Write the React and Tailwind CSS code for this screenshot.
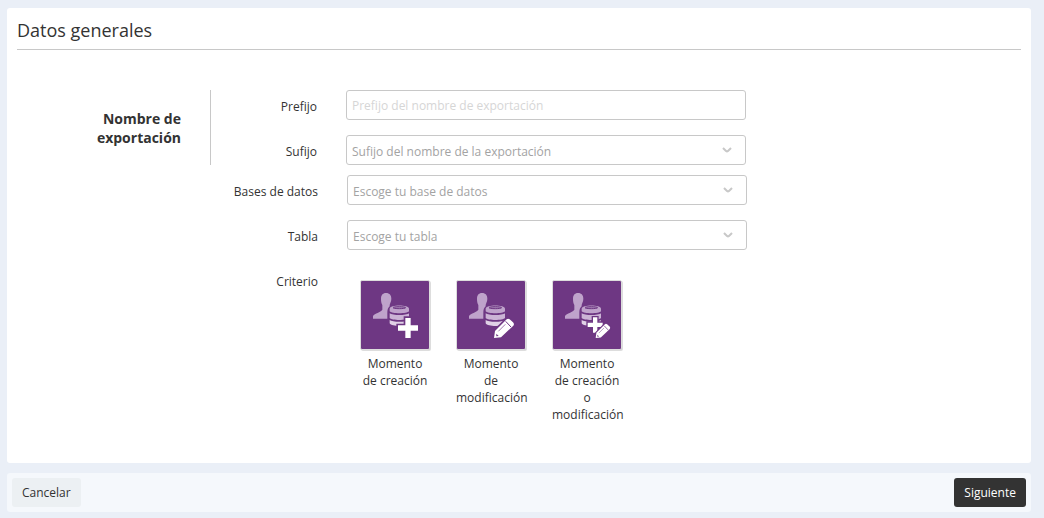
import React, { useState } from 'react';

const criteria = [
  { id: 'creation', label: 'Momento de creación', icon: 'plus' },
  { id: 'update', label: 'Momento de modificación', icon: 'pencil' },
  { id: 'both', label: 'Momento de creación o modificación', icon: 'both' }
];

function Pencil({ transform }) {
  return (
    <g transform={transform}>
      <path
        d="M0 60 L3 39 L38 4 Q42 0 47 4 L57 13 Q62 18 58 23 L21 58 Z"
        fill="#fff"
        stroke="#6e3783"
        strokeWidth="10"
        strokeLinejoin="round"
        paintOrder="stroke"
      />
      <path d="M35 10 L51 27" stroke="#6e3783" strokeWidth="3" fill="none" />
      <path d="M13 40 L34 19" stroke="#6e3783" strokeWidth="2" fill="none" />
      <path d="M7 47 L14 54 L7 55 Z" fill="#6e3783" />
    </g>
  );
}

function CriteriaIcon({ type }) {
  return (
    <svg viewBox="0 0 204 204" className="block h-full w-full" aria-hidden="true">
      {/* person */}
      <path
        d="M75 36 C86 36 91 43 91 53 C91 62 87 66 86 72 L86 76 C81 80 79 86 79 96 L79 113 L36 113 L36 105 C42 96 58 95 64 86 L64 72 C61 66 60 61 60 53 C60 43 65 36 75 36 Z"
        fill="#bfa3cb"
      />
      {/* database */}
      <path d="M86 83 C86 70 144 70 144 83 L144 91 C138 99 92 99 86 91 Z" fill="#bfa3cb" />
      <ellipse cx="115" cy="80" rx="19" ry="3" fill="#a27fb2" stroke="#6e3783" strokeWidth="3" />
      <path d="M86 97 C94 104 136 104 144 97 L144 111 C138 119 92 119 86 111 Z" fill="#cbb3d5" />
      <path d="M86 117 C94 124 136 124 144 117 L144 127 C138 138 92 138 86 127 Z" fill="#e0d1e6" />
      {type === 'plus' && (
        <path
          d="M133 111 H149 V133 H171 V149 H149 V171 H133 V149 H111 V133 H133 Z"
          fill="#fff"
          stroke="#6e3783"
          strokeWidth="10"
          paintOrder="stroke"
        />
      )}
      {type === 'pencil' && <Pencil transform="translate(111 111)" />}
      {type === 'both' && (
        <>
          <path
            d="M120 109 H133 V125 H149 V138 H133 V155 H120 V138 H104 V125 H120 Z"
            fill="#fff"
            stroke="#6e3783"
            strokeWidth="8"
            paintOrder="stroke"
          />
          <Pencil transform="translate(128 127) scale(0.73)" />
        </>
      )}
    </svg>
  );
}

function Field({ id, label, labelWidth, children }) {
  return (
    <div className="flex items-center">
      <label htmlFor={id} className={`${labelWidth} shrink-0 pt-0.5 text-right`}>
        {label}
      </label>
      <div className="ml-[29px] w-full max-w-[400px]">{children}</div>
    </div>
  );
}

function SelectBox({ id, placeholder }) {
  return (
    <div className="relative">
      <select
        id={id}
        className="block h-[30px] w-full appearance-none rounded-[3px] border border-[#c8c8c8] bg-white px-[5px] pt-[3px] text-[#a3a3a3] outline-none focus:border-[#6e3783]"
      >
        <option>{placeholder}</option>
      </select>
      <svg
        viewBox="0 0 10 6"
        className="pointer-events-none absolute top-3 right-3.5 h-1.5 w-2.5"
        fill="none"
        stroke="#c8c8c8"
        strokeWidth="2"
        aria-hidden="true"
      >
        <path d="M1 1 L4 4 Q5 4.8 6 4 L9 1" />
      </svg>
    </div>
  );
}

export default function App() {
  const [prefix, setPrefix] = useState('');
  const [selected, setSelected] = useState(null);

  return (
    <div className="min-h-screen bg-[#eaeff7] pt-2 pr-[13px] pb-1.5 pl-[7px] font-['Open_Sans',sans-serif] text-xs leading-[17px] text-[#333]">
      <main className="rounded-[3px] bg-white px-2.5 pt-2.5 pb-10">
        <h1 className="border-b border-[#c8c8c8] pb-[7px] text-lg leading-6">Datos generales</h1>

        <div className="mt-10 flex">
          <h2 className="mr-[29px] w-[164px] shrink-0 self-center text-right text-sm leading-[19px] font-bold">
            Nombre de
            <br />
            exportación
          </h2>
          <div className="flex grow flex-col gap-[15px] border-l border-[#c8c8c8]">
            <Field id="prefix" label="Prefijo" labelWidth="w-[106px]">
              <input
                id="prefix"
                type="text"
                value={prefix}
                onChange={(e) => setPrefix(e.target.value)}
                placeholder="Prefijo del nombre de exportación"
                className="block h-[30px] w-full rounded-[3px] border border-[#c8c8c8] bg-white px-[5px] outline-none placeholder:text-[#d6d6d6] focus:border-[#6e3783]"
              />
            </Field>
            <Field id="suffix" label="Sufijo" labelWidth="w-[106px]">
              <SelectBox id="suffix" placeholder="Sufijo del nombre de la exportación" />
            </Field>
          </div>
        </div>

        <div className="mt-2.5 flex flex-col gap-[15px]">
          <Field id="database" label="Bases de datos" labelWidth="w-[301px]">
            <SelectBox id="database" placeholder="Escoge tu base de datos" />
          </Field>
          <Field id="table" label="Tabla" labelWidth="w-[301px]">
            <SelectBox id="table" placeholder="Escoge tu tabla" />
          </Field>
        </div>

        <div className="mt-[30px] flex items-start">
          <span id="criteria-label" className="-mt-[7px] w-[301px] shrink-0 text-right">
            Criterio
          </span>
          <div role="group" aria-labelledby="criteria-label" className="ml-[42px] flex gap-[26px]">
            {criteria.map((item) => (
              <button
                key={item.id}
                type="button"
                aria-pressed={selected === item.id}
                onClick={() => setSelected(item.id)}
                className="flex w-[70px] cursor-pointer flex-col items-center"
              >
                <span className="block h-[70px] w-[70px] rounded-[2px] border border-[#ddd] bg-[#6e3783] shadow-[1px_1px_0_#ddd]">
                  <CriteriaIcon type={item.icon} />
                </span>
                <span className="mt-[5px] w-full text-center">{item.label}</span>
              </button>
            ))}
          </div>
        </div>
      </main>

      <footer className="mt-2.5 flex justify-between rounded-[3px] bg-[#f5f8fc] p-[5px]">
        <button type="button" className="cursor-pointer rounded-[3px] bg-[#ecf0f3] px-2.5 py-1.5">
          Cancelar
        </button>
        <button type="button" className="cursor-pointer rounded-[3px] bg-[#333] px-2.5 py-1.5 text-white">
          Siguiente
        </button>
      </footer>
    </div>
  );
}
